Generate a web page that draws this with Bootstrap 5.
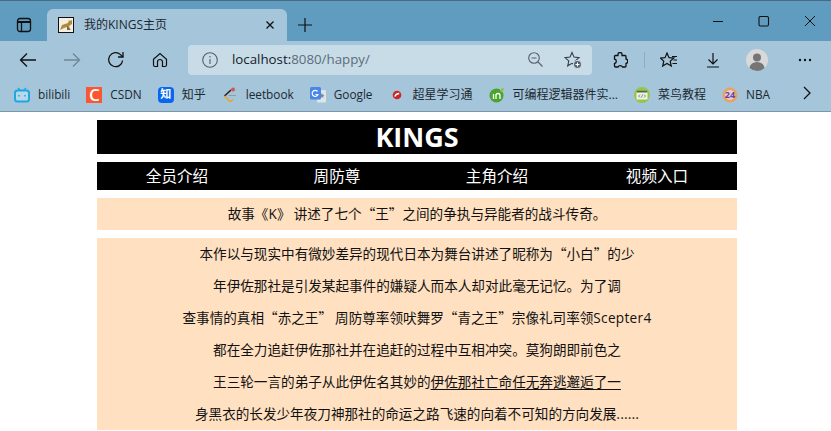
<!DOCTYPE html>
<html lang="zh">
<head>
<meta charset="UTF-8">
<title>我的KINGS主页</title>
<link href="https://cdn.jsdelivr.net/npm/bootstrap@5.3.0/dist/css/bootstrap.min.css" rel="stylesheet">
<style>
body { font-family: "Open Sans", "Noto Sans CJK SC", sans-serif; background: #fff; overflow: hidden; height: 431px; }
svg { display: block; flex: none; }

/* browser frame */
.tab-strip { height: 41px; background: #5f9cbf; border-top: 1px solid #4b6b80; }
.side-btn { width: 47px; }
.page-tab { width: 240px; height: 32px; margin-top: 8px; background: #a5c5da; border-radius: 6px 6px 0 0; padding: 0 12px 0 11px; font-size: 12px; color: #1c2830; }
.page-tab span { margin-left: 10px; }
.new-tab { width: 35px; }
.win-group { margin-right: -2px; }
.win-btn { width: 46px; padding-top: 15px; }
.tool-bar { height: 37px; background: #a5c5da; padding-left: 6px; }
.tool-btn { width: 44px; }
.addr-box { width: 404px; height: 30px; margin: 0 6px; background: #c8dce8; border-radius: 4px; padding: 0 10px 0 14px; font-size: 13.3px; color: #5c6c78; }
.addr-box b { font-weight: 400; color: #15202a; }
.addr-url { margin-left: 14px; }
.addr-star { margin-left: 21px; }
.tool-sep { width: 1px; height: 16px; background: #8eacbf; margin: 0 2px; }
.dots-btn { margin-left: 4px; }
.mark-bar { height: 34px; background: #a5c5da; border-bottom: 1px solid #7d97a8; padding-left: 14px; font-size: 12px; color: #1c2830; }
.mark-item { gap: 8px; margin-right: 16px; white-space: nowrap; }
.mark-lat { font-size: 11.8px; }
.mark-more { position: absolute; left: 802px; top: 85px; }
.tile { width: 16px; height: 16px; display: flex; align-items: center; justify-content: center; color: #fff; }
.tile-csdn { background: #fc5531; font-size: 17px; font-weight: 600; }
.tile-zhihu { background: #0a66f0; font-size: 11px; font-weight: 700; }

/* page */
.kings-wrap { width: 640px; margin: 8px 0 0 97px; }
.kings-head { height: 34px; line-height: 34px; background: #000; color: #fff; font-size: 27px; font-weight: 700; text-align: center; margin-bottom: 8px; }
.kings-nav { height: 28px; background: #000; margin-bottom: 8px; }
.kings-nav a { flex: 1 1 0; text-align: center; color: #fff; text-decoration: none; font-size: 15.6px; line-height: 28px; }
.kings-box { display: flow-root; font-family: "Noto Sans CJK SC", sans-serif; background: #ffe0c0; color: #111; font-size: 13.6px; line-height: 32px; text-align: center; margin-bottom: 8px; padding-bottom: 1px; }
.kings-box > div { margin-top: -1px; }
.kings-box u { text-underline-offset: 2px; }
.kings-lat { font-family: "Open Sans", sans-serif; line-height: 1; letter-spacing: .3px; }
</style>
</head>
<body>

<div class="tab-strip d-flex">
  <div class="side-btn d-flex justify-content-center pt-3">
    <svg width="16" height="16" viewBox="0 0 16 16" fill="none" stroke="#111" stroke-width="1.3"><rect x="1.500" y="1.500" width="13" height="13" rx="2.500"/><path d="M1.500 5h13" stroke-width="2"/><path d="M5.500 5v9.500"/></svg>
  </div>
  <div class="page-tab d-flex align-items-center">
    <svg width="16" height="16" viewBox="0 0 16 16"><rect x=".5" y=".5" width="15" height="15" fill="#f4efe2" stroke="#111"/><path d="M2 13l2-5 6-2 1-3 1 1 2-1v4l-3 2 1 3-3-2-3 1z" fill="#b08a3c"/><path d="M9 9l4 4H9z" fill="#7a6a45"/></svg>
    <span class="flex-grow-1">我的KINGS主页</span>
    <svg width="10" height="10" viewBox="0 0 10 10" stroke="#111" stroke-width="1.3"><path d="M1.500 1.500l7 7M8.500 1.500l-7 7"/></svg>
  </div>
  <div class="new-tab d-flex justify-content-center pt-3">
    <svg width="16" height="16" viewBox="0 0 16 16" stroke="#111" stroke-width="1.2"><path d="M8 1v14M1 8h14"/></svg>
  </div>
  <div class="win-group ms-auto d-flex">
    <div class="win-btn d-flex justify-content-center"><svg width="12" height="12" viewBox="0 0 12 12" stroke="#111"><path d="M1 5.500h10"/></svg></div>
    <div class="win-btn d-flex justify-content-center"><svg width="12" height="12" viewBox="0 0 12 12" fill="none" stroke="#111" stroke-width="1.1"><rect x="1" y=".5" width="9.500" height="9.500" rx="1.500"/></svg></div>
    <div class="win-btn d-flex justify-content-center"><svg width="12" height="12" viewBox="0 0 12 12" stroke="#111"><path d="M1 0l10 10M11 0L1 10"/></svg></div>
  </div>
</div>

<div class="tool-bar d-flex align-items-center">
  <div class="tool-btn d-flex justify-content-center"><svg width="18" height="16" viewBox="0 0 18 16" fill="none" stroke="#111" stroke-width="1.3"><path d="M17 8H1.500M8 1.500L1.500 8 8 14.500"/></svg></div>
  <div class="tool-btn d-flex justify-content-center"><svg width="18" height="16" viewBox="0 0 18 16" fill="none" stroke="#6f8797" stroke-width="1.3"><path d="M1 8h15.500M10 1.500L16.500 8 10 14.500"/></svg></div>
  <div class="tool-btn d-flex justify-content-center"><svg width="18" height="18" viewBox="0 0 18 18" fill="none" stroke="#111" stroke-width="1.3"><path d="M15.600 9.500A7 7 0 1 1 13.500 3.600L16 6"/><path d="M16 1v5h-5"/></svg></div>
  <div class="tool-btn d-flex justify-content-center"><svg width="16" height="16" viewBox="0 0 16 16" fill="none" stroke="#111" stroke-width="1.2"><path d="M1.500 7.200L8 1.500l6.500 5.700V13a1.500 1.500 0 0 1-1.500 1.500h-2.500V10a2.500 2.500 0 0 0-5 0v4.500H3A1.500 1.500 0 0 1 1.500 13z"/></svg></div>
  <div class="addr-box d-flex align-items-center">
    <svg width="16" height="16" viewBox="0 0 16 16" fill="none" stroke="#555f68" stroke-width="1.100"><circle cx="8" cy="8" r="7.300"/><path d="M8 7v5M8 4v1.400"/></svg>
    <span class="addr-url flex-grow-1"><b>localhost:</b>8080/happy/</span>
    <svg width="15" height="15" viewBox="0 0 15 15" fill="none" stroke="#555f68" stroke-width="1.100"><circle cx="6" cy="6" r="5.300"/><path d="M3.500 6h5M10 10l4.500 4.500"/></svg>
    <svg class="addr-star" width="18" height="18" viewBox="0 0 18 18" fill="none" stroke="#333d45" stroke-width="1.100"><path d="M8 1.500l2 4.600 5 .5-3.800 3.300 1.100 4.900L8 12.300l-4.300 2.500 1.100-4.900L1 6.600l5-.5z"/><circle cx="13.500" cy="13.500" r="4" fill="#55616b" stroke="#c8dce8"/><path d="M13.500 11.500v4M11.500 13.500h4" stroke="#fff"/></svg>
  </div>
  <div class="tool-btn d-flex justify-content-center"><svg width="16" height="16" viewBox="0 0 16 16" fill="none" stroke="#111" stroke-width="1.300"><path d="M6 2.500a2 2 0 0 1 4 0v1h3a1 1 0 0 1 1 1V7a2.300 2.300 0 0 1 0 4.500V14a1 1 0 0 1-1 1h-2.500a2.500 2.500 0 0 0-4.500 0H3.500a1 1 0 0 1-1-1v-2.500a2.300 2.300 0 0 0 0-4.500V4.500a1 1 0 0 1 1-1H6z"/></svg></div>
  <div class="tool-sep"></div>
  <div class="tool-btn d-flex justify-content-center"><svg width="18" height="16" viewBox="0 0 18 16" fill="none" stroke="#111" stroke-width="1.200"><path d="M7 1l2 4.700 4.800.4-3.600 3.100 1.100 4.800L7 11.500 2.700 14l1.100-4.800L.5 6.100l4.500-.4z"/><path d="M12 4.500h5M13.500 8h3.500M12.500 11.500h4.500"/></svg></div>
  <div class="tool-btn d-flex justify-content-center"><svg width="14" height="16" viewBox="0 0 14 16" fill="none" stroke="#111" stroke-width="1.200"><path d="M7 1v10.500M2.500 7.500L7 12l4.500-4.500M1 15h12"/></svg></div>
  <div class="tool-btn d-flex justify-content-center"><svg width="22" height="22" viewBox="0 0 22 22"><circle cx="11" cy="11" r="11" fill="#d9d9d9"/><circle cx="11" cy="8.500" r="4" fill="#757575"/><path d="M3.500 19a7.500 6 0 0 1 15 0 11 11 0 0 1-15 0z" fill="#757575"/></svg></div>
  <div class="tool-btn dots-btn d-flex justify-content-center"><svg width="14" height="4" viewBox="0 0 14 4" fill="#111"><circle cx="2" cy="2" r="1.200"/><circle cx="7" cy="2" r="1.200"/><circle cx="12" cy="2" r="1.200"/></svg></div>
</div>

<div class="mark-bar d-flex align-items-center">
  <div class="mark-item d-flex align-items-center">
    <svg width="16" height="16" viewBox="0 0 16 16"><path d="M4 1l2.500 2.500M12 1L9.500 3.500" stroke="#21a6dd" stroke-width="1.300"/><rect x="1" y="3.500" width="14" height="11" rx="2.500" fill="#b5d8ea" stroke="#21a6dd" stroke-width="2"/><path d="M5 8v1.500M11 8v1.500" stroke="#21a6dd" stroke-width="1.500"/></svg>
    <span class="mark-lat">bilibili</span>
  </div>
  <div class="mark-item d-flex align-items-center">
    <div class="tile tile-csdn">C</div>
    <span class="mark-lat">CSDN</span>
  </div>
  <div class="mark-item d-flex align-items-center">
    <div class="tile tile-zhihu rounded-1">知</div>
    <span>知乎</span>
  </div>
  <div class="mark-item d-flex align-items-center">
    <svg width="16" height="16" viewBox="0 0 16 16" fill="none"><path d="M9 3L2.500 9" stroke="#222" stroke-width="1.600"/><path d="M2.500 9l5.500 5.500 3-1.500" stroke="#eaa528" stroke-width="1.600"/><path d="M6.500 8.500h7.500" stroke="#9a9a9a"/><circle cx="11" cy="2.500" r="2" fill="#d9534f"/></svg>
    <span class="mark-lat">leetbook</span>
  </div>
  <div class="mark-item d-flex align-items-center">
    <svg width="16" height="16" viewBox="0 0 16 16"><rect x="7" y="3" width="9" height="12.500" rx="1" fill="#dfe4e6"/><path d="M12 6l.8 1.800 1.700.2-1.300 1.200.4 1.800-1.600-1-1.600 1 .4-1.800L9.500 8l1.700-.2z" fill="#7b8791"/><rect width="11" height="12.500" rx="1.500" fill="#4a86e8"/><path d="M7.500 4.500a3 3 0 1 0 .5 3H5.500" fill="none" stroke="#fff" stroke-width="1.200"/></svg>
    <span class="mark-lat">Google</span>
  </div>
  <div class="mark-item d-flex align-items-center">
    <svg width="16" height="16" viewBox="0 0 16 16"><circle cx="8" cy="8" r="4.300" fill="#c92626"/><path d="M5.800 9.500c1-2.500 2.500-3 4.400-3" stroke="#fff" stroke-width="1.300" fill="none"/></svg>
    <span>超星学习通</span>
  </div>
  <div class="mark-item d-flex align-items-center">
    <svg width="16" height="16" viewBox="0 0 16 16"><circle cx="7.500" cy="8.500" r="7" fill="#4aa52e"/><path d="M11 3.500c1-1.500 2.500-2.500 4-3 0 2-1 4-3 5z" fill="#8cc63f"/><path d="M4.500 7v5M7 12V7M7 8.500a2 2 0 0 1 4 0V12" stroke="#fff" stroke-width="1.300" fill="none"/></svg>
    <span>可编程逻辑器件实...</span>
  </div>
  <div class="mark-item d-flex align-items-center">
    <svg width="16" height="16" viewBox="0 0 16 16"><circle cx="8" cy="8" r="8" fill="#92c84a"/><rect x="2.500" y="3.500" width="11" height="9" fill="#eef3e6"/><path d="M2.500 3.500h11v2h-11z" fill="#4f6f33"/><path d="M6 7.500L4.500 9 6 10.500M10 7.500L11.500 9 10 10.500M8.700 7.500l-1.400 3" stroke="#666" fill="none" stroke-width=".8"/></svg>
    <span>菜鸟教程</span>
  </div>
  <div class="mark-item d-flex align-items-center">
    <svg width="16" height="16" viewBox="0 0 16 16"><circle cx="8" cy="8" r="7.500" fill="#e9a35f"/><circle cx="8" cy="8" r="5" fill="#e3cfd8"/><text x="8" y="11" font-size="9" font-weight="700" fill="#6b3fa0" text-anchor="middle">24</text></svg>
    <span class="mark-lat">NBA</span>
  </div>
</div>
<svg class="mark-more" width="10" height="16" viewBox="0 0 10 16" fill="none" stroke="#111" stroke-width="1.300"><path d="M2 2l6 6-6 6"/></svg>

<div class="kings-wrap">
  <div class="kings-head">KINGS</div>
  <div class="kings-nav d-flex">
    <a href="#">全员介绍</a>
    <a href="#">周防尊</a>
    <a href="#">主角介绍</a>
    <a href="#">视频入口</a>
  </div>
  <div class="kings-box"><div>故事《<span class="kings-lat">K</span>》 讲述了七个“王”之间的争执与异能者的战斗传奇。</div></div>
  <div class="kings-box"><div>
    本作以与现实中有微妙差异的现代日本为舞台讲述了昵称为“小白”的少<br>
    年伊佐那社是引发某起事件的嫌疑人而本人却对此毫无记忆。为了调<br>
    查事情的真相“赤之王” 周防尊率领吠舞罗“青之王”宗像礼司率领<span class="kings-lat">Scepter4</span><br>
    都在全力追赶伊佐那社并在追赶的过程中互相冲突。莫狗朗即前色之<br>
    王三轮一言的弟子从此伊佐名其妙的<u>伊佐那社亡命任无奔逃邂逅了一</u><br>
    身黑衣的长发少年夜刀神那社的命运之路飞速的向着不可知的方向发展......
  </div></div>
</div>

<script src="https://cdn.jsdelivr.net/npm/bootstrap@5.3.0/dist/js/bootstrap.bundle.min.js"></script>
</body>
</html>
